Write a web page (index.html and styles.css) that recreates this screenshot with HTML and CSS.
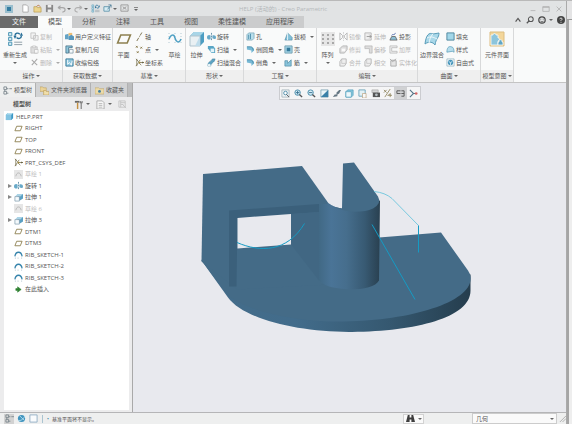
FILE: index.html
```html
<!DOCTYPE html>
<html lang="zh-CN">
<head>
  <meta charset="UTF-8">
  <title>HELP (活动的) - Creo Parametric</title>
  <link rel="stylesheet" href="styles.css">
</head>
<body>
<svg class="defs" aria-hidden="true">
  <defs>
    <symbol id="plane" viewBox="0 0 10 10"><path d="M3 2.500h6L7 7.500H1z" fill="none" stroke="#8d8050" stroke-width="1"/></symbol>
    <symbol id="csys" viewBox="0 0 10 10"><path d="M1 1l3 3 2-2M1 9l3-4 3 3M2 1v8M5 5h5" fill="none" stroke="#7a7350" stroke-width=".9"/><circle cx="5" cy="5" r="1" fill="#a28b3c"/><path d="M8 4l2 1-2 1z" fill="#5f5a3c"/></symbol>
    <symbol id="sketch" viewBox="0 0 10 10"><path d="M1 7C2 1 8 1 9 7" fill="none" stroke="#3583ab" stroke-width="1.400"/><path d="M1 9h1M4 9h1M8 9h1" stroke="#9fb7c4"/></symbol>
    <symbol id="sketch-off" viewBox="0 0 10 10"><path d="M0 0h10v10H0z" fill="#e6e6e6"/><path d="M2 7C3 2 7 2 8 7" fill="none" stroke="#b5b5b5"/></symbol>
    <symbol id="revolve" viewBox="0 0 10 10"><path d="M0 6c0-3 3-3 4-2v4C2 9 0 8 0 6zM6 4c2-1 4 0 4 2S8 8 6 7z" fill="#68a9c8"/><path d="M5 1v8" stroke="#5b8aa3" stroke-dasharray="2 1"/></symbol>
    <symbol id="extrude" viewBox="0 0 10 10"><path d="M4 1h6v5L7 8H4z" fill="#5ba0c3"/><path d="M4 1h6L7 4H1z" fill="#a9d3e6"/><path d="M1 4h5v5H1z" fill="#f5fafc" stroke="#7291a4" stroke-width=".7"/></symbol>
    <symbol id="part" viewBox="0 0 10 10"><path d="M1 3l2-2h6v6L7 9H1z" fill="#3b97c5"/><path d="M1 3h6v6H1z" fill="#82c3e2"/><path d="M1 3l2-2h6L7 3z" fill="#b7e0f1"/></symbol>
    <symbol id="insert" viewBox="0 0 10 10"><path d="M2 4h2V2l4 3-4 3V6H2z" fill="#2e8131" stroke="#2e8131" stroke-width=".6"/></symbol>
    <symbol id="copy" viewBox="0 0 10 10"><path d="M1 1h5v6H1zM4 4h5v5H4z" fill="#f3f3f3" stroke="#c4c4c4"/></symbol>
    <symbol id="paste" viewBox="0 0 10 10"><path d="M1 2h7v7H1z" fill="#ddd" stroke="#c4c4c4"/><path d="M3 1h3v2H3zM5 5h4v4H5z" fill="#f8f8f8" stroke="#bbb" stroke-width=".7"/></symbol>
    <symbol id="delete" viewBox="0 0 10 10"><path d="M2 2l6 6M8 1L2 8" stroke="#a9a9a9" stroke-width="1.200"/></symbol>
    <symbol id="udf" viewBox="0 0 10 10"><path d="M0 3l4-1v6H0z" fill="#64a3c5"/><path d="M4 1h4v3H4z" fill="#efbd72"/><path d="M4 5l3-2 3 2v4H4z" fill="#5796bc"/></symbol>
    <symbol id="geom" viewBox="0 0 10 10"><path d="M1 9V1h7v2H4v6z" fill="#91c8dc" stroke="#37647d" stroke-width=".8"/><path d="M5 5h4v4H5z" fill="#f4f9fb" stroke="#6c8798" stroke-width=".7"/></symbol>
    <symbol id="wrap" viewBox="0 0 10 10"><path d="M1 1h8v8H1z" fill="#8bc4dc" stroke="#3d7d9b"/><path d="M3 2v5l2-2 2 3 1-5" fill="none" stroke="#fff"/></symbol>
    <symbol id="axis" viewBox="0 0 10 10"><path d="M2 10L8 0" stroke="#776c45" stroke-dasharray="4 1 1 1"/></symbol>
    <symbol id="points" viewBox="0 0 10 10"><path d="M1 1l2 2m0-2L1 3M6 2l2 2m0-2L6 4M2 7l2 2m0-2L2 9" stroke="#887848"/></symbol>
    <symbol id="sweep" viewBox="0 0 10 10"><path d="M1 1h6l2 3v5H5L1 4z" fill="#58a5c5"/><path d="M4 4h4v4H4z" fill="#e2f2f8"/></symbol>
    <symbol id="blend" viewBox="0 0 10 10"><path d="M1 9C1 3 4 5 6 1h3C8 6 5 4 4 9z" fill="#5ba3c3" stroke="#447e9b" stroke-width=".6"/><circle cx="2.500" cy="8" r="1.500" fill="#e9f4f8"/></symbol>
    <symbol id="hole" viewBox="0 0 10 10"><path d="M1 3l2-2h6v6L7 9H1z" fill="#b8deeb" stroke="#6b9caf" stroke-width=".7"/><path d="M3 3v5M5 2v6" stroke="#4b8caa"/></symbol>
    <symbol id="round" viewBox="0 0 10 10"><path d="M1 2h4c3 0 4 2 4 4L6 9V6L1 5z" fill="#77b9d5"/><path d="M1 2h4c2 0 3 2 3 4" fill="none" stroke="#4b8dac"/></symbol>
    <symbol id="draft" viewBox="0 0 10 10"><path d="M1 9l3-8 5 5v3z" fill="#80bfd8" stroke="#538ca7" stroke-width=".7"/><path d="M4 1v8" stroke="#eef7fa"/></symbol>
    <symbol id="shell" viewBox="0 0 10 10"><path d="M1 1h8v8H1z" fill="#a4d3e5" stroke="#739fb1"/><path d="M3 3h4v4H3z" fill="#347a9b"/></symbol>
    <symbol id="rib" viewBox="0 0 10 10"><path d="M1 3h3v3l4-4v7H1z" fill="#89c4db" stroke="#548fa9" stroke-width=".8"/></symbol>
    <symbol id="mirror" viewBox="0 0 10 10"><path d="M1 1l3 3v2L1 9zM9 1L6 4v2l3 3z" fill="none" stroke="#b5b5b5"/><path d="M5 0v10" stroke="#b5b5b5" stroke-width=".6" stroke-dasharray="2 1"/></symbol>
    <symbol id="trim" viewBox="0 0 10 10"><path d="M1 4l3-3h5v4L6 9H1z" fill="#ddd" stroke="#b5b5b5"/><path d="M3 4h4v3H3z" fill="#fafafa"/></symbol>
    <symbol id="extend" viewBox="0 0 10 10"><path d="M1 1h7v8H1z" fill="#eee" stroke="#b5b5b5"/><path d="M3 5h5M6 3l2 2-2 2" fill="none" stroke="#999"/></symbol>
    <symbol id="offset" viewBox="0 0 10 10"><path d="M1 1h8v8H6V4H1z" fill="#ddd" stroke="#b5b5b5" stroke-width=".8"/></symbol>
    <symbol id="merge" viewBox="0 0 10 10"><path d="M1 4l2-3h5v5L6 9H1z" fill="#eee" stroke="#b5b5b5"/><path d="M3 1v5h5" fill="none" stroke="#bbb" stroke-width=".7"/></symbol>
    <symbol id="project" viewBox="0 0 10 10"><path d="M1 9l2-4h4l2 4z" fill="#8cbfd5" stroke="#555" stroke-width=".8"/><path d="M3 4c1-3 3 1 4-3" fill="none" stroke="#526cad"/></symbol>
    <symbol id="thicken" viewBox="0 0 10 10"><path d="M9 1H1v8h8V7H3V3h6z" fill="#f1f1f1" stroke="#aaa" stroke-width=".7"/></symbol>
    <symbol id="solidify" viewBox="0 0 10 10"><path d="M2 3h6v6H2zM1 1l3 3 4-3" fill="#e5e5e5" stroke="#aaa"/></symbol>
    <symbol id="fill" viewBox="0 0 10 10"><path d="M1 1h8v8H1z" fill="#a2d7e9" stroke="#4b839a"/></symbol>
    <symbol id="style" viewBox="0 0 10 10"><path d="M1 8C1 3 3 1 6 2c2 0 3 3 3 6L7 7z" fill="#b7deed" stroke="#5a9cb8" stroke-width=".8"/></symbol>
    <symbol id="free" viewBox="0 0 10 10"><path d="M1 1h8v8H1z" fill="none" stroke="#83a9b9" stroke-width=".7"/><circle cx="5" cy="5" r="3" fill="#4a98bd"/><path d="M3 4l2 1 2-1M5 5v3" stroke="#d1eaf4" fill="none"/></symbol>
    <symbol id="tree-icon" viewBox="0 0 10 10"><path d="M1 1h3v3H1zM1 6h3v3H1zM2 4v2M4 3h2M7 3h3M4 8h2" fill="none" stroke="#7e8990"/></symbol>
    <symbol id="folders" viewBox="0 0 10 10"><path d="M0 1h3l1 1h3v4H0z" fill="#ead399" stroke="#ba9d59" stroke-width=".6"/><path d="M4 5h2l1 1h3v4H4z" fill="#f0dfab" stroke="#b69349" stroke-width=".6"/></symbol>
    <symbol id="favorite" viewBox="0 0 10 10"><path d="M0 2h4l1 1h5v6H0z" fill="#ecdba9" stroke="#bda263" stroke-width=".6"/><circle cx="5" cy="6" r="1.600" fill="#427fa2"/></symbol>
    <symbol id="tools" viewBox="0 0 10 10"><path d="M1 1h5v2H1z" fill="#666"/><path d="M4 3v7" stroke="#c48f40" stroke-width="1.600"/><path d="M8 3v7M7 1v2h2V1" fill="none" stroke="#777" stroke-width="1.200"/></symbol>
    <symbol id="list" viewBox="0 0 10 10"><path d="M1 1h6l2 2v7H1z" fill="#f7f7f7" stroke="#aaa"/><path d="M3 4h4M3 6h4M3 8h4" stroke="#999" stroke-width=".7"/></symbol>
    <symbol id="filter" viewBox="0 0 10 10"><path d="M1 1h7v7H1zM3 1v7M3 3h5M3 5h3M5 5l4 4" fill="none" stroke="#c4c4c4"/></symbol>
    <symbol id="new" viewBox="0 0 10 10"><path d="M2 1h4l2 2v6H2z" fill="#fff" stroke="#9a9a9a" stroke-width=".8"/></symbol>
    <symbol id="open" viewBox="0 0 10 10"><path d="M1 3h3l1 1h4v5H1z" fill="#ecd58e" stroke="#b69749" stroke-width=".7"/><path d="M4 3c1-2 3-2 4 0" fill="none" stroke="#ba713b"/></symbol>
    <symbol id="save" viewBox="0 0 10 10"><path d="M1 1h8v8H1z" fill="#888"/><path d="M3 1h4v3H3zM3 6h4v3H3z" fill="#eee"/></symbol>
    <symbol id="undo" viewBox="0 0 10 10"><path d="M1 4h5c4 0 4 5 0 5M1 4l3-2M1 4l3 2" fill="none" stroke="#a6a6a6" stroke-width="1.200"/></symbol>
    <symbol id="redo" viewBox="0 0 10 10"><path d="M9 4H4C0 4 0 9 4 9M9 4L6 2M9 4L6 6" fill="none" stroke="#b0b0b0" stroke-width="1.200"/></symbol>
    <symbol id="regen" viewBox="0 0 10 10"><path d="M1 1h2v2H1zM1 4h2v2H1zM1 7h2v2H1z" fill="#d4ebf4" stroke="#4a93b3" stroke-width=".6"/><path d="M4.500 7h5M4.500 8.500h5" stroke="#788b95" stroke-width=".5"/><path d="M5 3c0-2 2-2 3-1M9 3c0 2-2 2-3 1" fill="none" stroke="#286f98" stroke-width=".9"/><path d="M4 3h2L5 5zM8 3h2L9 1z" fill="#286f98"/></symbol>
    <symbol id="window" viewBox="0 0 10 10"><path d="M1 3h6v5H1z" fill="#d9eef5" stroke="#6296ad"/><path d="M5 6l4-5M9 1v3M9 1H6" fill="none" stroke="#447895" stroke-width=".8"/></symbol>
    <symbol id="close-win" viewBox="0 0 10 10"><path d="M1 1h8v7H1zM3 3l4 3M7 3L3 6" fill="none" stroke="#999"/></symbol>
    <symbol id="search" viewBox="0 0 10 10"><circle cx="6" cy="4" r="3" fill="none" stroke="#555" stroke-width="1.300"/><path d="M4 6L1 9" stroke="#555" stroke-width="1.600"/></symbol>
    <symbol id="zoom-fit" viewBox="0 0 10 10"><path d="M1 1h8v8H1z" fill="#edf3f5" stroke="#9aabb3" stroke-width=".8"/><circle cx="5" cy="4.500" r="2" fill="#fff" stroke="#4c8ba8"/><path d="M6 6l3 3" stroke="#555"/></symbol>
    <symbol id="zoom-in" viewBox="0 0 10 10"><circle cx="4" cy="4" r="3" fill="#d8edf5" stroke="#4288a8"/><path d="M2 4h4M4 2v4" stroke="#356f91"/><path d="M6 6l3 3" stroke="#555" stroke-width="1.500"/></symbol>
    <symbol id="zoom-out" viewBox="0 0 10 10"><circle cx="4" cy="4" r="3" fill="#d8edf5" stroke="#4288a8"/><path d="M2 4h4" stroke="#356f91"/><path d="M6 6l3 3" stroke="#555" stroke-width="1.500"/></symbol>
    <symbol id="repaint" viewBox="0 0 10 10"><path d="M1 1h8v8H1z" fill="#e9f4f8" stroke="#6c98ac" stroke-width=".8"/><path d="M1 9L9 1v8z" fill="#3a80a8"/></symbol>
    <symbol id="shade" viewBox="0 0 10 10"><path d="M1 9l2-3h2V4l3-3h2L8 5 6 6v2z" fill="#657783"/></symbol>
    <symbol id="views" viewBox="0 0 10 10"><path d="M1 3l2-2h6v6L7 9H1z" fill="#8ccbe0" stroke="#499bb9" stroke-width=".8"/><path d="M1 3h6v6H1z" fill="#eef8fb" stroke="#499bb9" stroke-width=".7"/></symbol>
    <symbol id="view-manager" viewBox="0 0 10 10"><path d="M1 1h7v7H1z" fill="#e2f1f6" stroke="#6ea5bb"/><path d="M5 5h4v5H5z" fill="#f9f9f9" stroke="#b59c77" stroke-width=".7"/></symbol>
    <symbol id="camera" viewBox="0 0 10 10"><path d="M1 1h7v3H1z" fill="#d5d5d5" stroke="#999" stroke-width=".6"/><path d="M2 4h8v5H2z" fill="#555"/><circle cx="6" cy="6.500" r="1.500" fill="#b7bfc2"/></symbol>
    <symbol id="datum" viewBox="0 0 10 10"><path d="M1 1l3 3m0-3L1 4M8 0L2 9M6 7l2-2v4M5 7h5" fill="none" stroke="#8b7f55" stroke-width=".9"/></symbol>
    <symbol id="annotation" viewBox="0 0 10 10"><path d="M1 2h4M1 2v3h4M6 2h3v6H6M6 5h3" fill="none" stroke="#555"/></symbol>
    <symbol id="spin" viewBox="0 0 10 10"><path d="M1 1l4 4-4 4M5 5h3" fill="none" stroke="#547588" stroke-width="1.200"/><circle cx="8" cy="5" r="1.500" fill="#d26767"/></symbol>
    <symbol id="web" viewBox="0 0 10 10"><circle cx="5" cy="5" r="4" fill="#4194be"/><path d="M1 7c3 1 6-1 8-5M3 2l5 5" stroke="#b8e0f0" fill="none"/></symbol>
    <symbol id="blank" viewBox="0 0 10 10"><path d="M1 1h8v8H1z" fill="#f9fbfd" stroke="#91aec4"/></symbol>
    <symbol id="find" viewBox="0 0 10 10"><path d="M2 1h2v3h2V1h2l2 8H6V6H4v3H0z" fill="#3e3e3e"/></symbol>
  </defs>
</svg>

<div class="desktop">
<div class="app">
  <header class="titlebar">
    <div class="quick">
      <button class="app-icon" aria-label="Creo"><span></span></button>
      <button aria-label="新建"><svg><use href="#new"/></svg></button>
      <button aria-label="打开"><svg><use href="#open"/></svg></button>
      <button aria-label="保存"><svg><use href="#save"/></svg></button>
      <button aria-label="撤消"><svg><use href="#undo"/></svg><i class="caret"></i></button>
      <button aria-label="重做"><svg><use href="#redo"/></svg><i class="caret"></i></button>
      <button aria-label="重新生成"><svg><use href="#regen"/></svg></button>
      <button aria-label="窗口"><svg><use href="#window"/></svg><i class="caret"></i></button>
      <button aria-label="关闭窗口"><svg><use href="#close-win"/></svg></button>
      <button class="more" aria-label="自定义"><i class="caret"></i></button>
    </div>
    <h1 class="title">HELP (活动的) - Creo Parametric</h1>
    <div class="win-buttons">
      <button aria-label="最小化"><svg viewBox="0 0 10 10"><path d="M2 7h6"/></svg></button>
      <button aria-label="最大化"><svg viewBox="0 0 10 10"><path d="M1 2h8v6H1zM1 3h8"/></svg></button>
      <button aria-label="关闭"><svg viewBox="0 0 10 10"><path d="M2 2l6 6M8 2L2 8"/></svg></button>
    </div>
  </header>

  <nav class="tabs">
    <button class="tab file">文件</button>
    <button class="tab active">模型</button>
    <button class="tab">分析</button>
    <button class="tab">注释</button>
    <button class="tab">工具</button>
    <button class="tab">视图</button>
    <button class="tab">柔性建模</button>
    <button class="tab">应用程序</button>
    <div class="help">
      <button aria-label="折叠功能区"><svg viewBox="0 0 10 10"><path d="M2 7l3-4 3 4" fill="none" stroke="#555" stroke-width="1.500"/></svg></button>
      <button aria-label="搜索"><svg><use href="#search"/></svg></button>
      <button aria-label="社区"><svg viewBox="0 0 10 10"><circle cx="5" cy="5" r="4" fill="none" stroke="#444" stroke-width="1.500"/><path d="M3 4h1M6 4h1M3 6c1 2 3 2 4 0" fill="none" stroke="#444"/></svg><i class="caret"></i></button>
      <button aria-label="帮助"><svg viewBox="0 0 10 10"><circle cx="5" cy="5" r="5" fill="#444"/><path d="M3.500 4c0-2 3-2 3 0L5 5.500V6.500M5 7.500v1" fill="none" stroke="#fff"/></svg></button>
    </div>
  </nav>

  <div class="ribbon">
    <section class="group g-operate">
      <div class="tools">
        <button class="big"><svg><use href="#regen"/></svg>重新生成<i class="caret"></i></button>
        <div class="col">
          <button disabled><svg><use href="#copy"/></svg>复制</button>
          <button disabled><svg><use href="#paste"/></svg>粘贴<i class="caret"></i></button>
          <button disabled><svg><use href="#delete"/></svg>删除<i class="caret"></i></button>
        </div>
      </div>
      <button class="caption">操作<i class="caret"></i></button>
    </section>
    <section class="group g-data">
      <div class="tools">
        <div class="col">
          <button><svg><use href="#udf"/></svg>用户定义特征</button>
          <button><svg><use href="#geom"/></svg>复制几何</button>
          <button><svg><use href="#wrap"/></svg>收缩包络</button>
        </div>
      </div>
      <button class="caption">获取数据<i class="caret"></i></button>
    </section>
    <section class="group g-datum">
      <div class="tools">
        <button class="big"><svg><use href="#plane"/></svg>平面</button>
        <div class="col">
          <button><svg><use href="#axis"/></svg>轴</button>
          <button><svg><use href="#points"/></svg>点<i class="caret"></i></button>
          <button><svg><use href="#csys"/></svg>坐标系</button>
        </div>
        <button class="big"><svg viewBox="0 0 16 16"><path d="M2 2v12M8 2v12M14 2v12" stroke="#b2c9d3" stroke-dasharray="1 2"/><path d="M2 8C4 3 7 3 8 7s4 6 6 1" fill="none" stroke="#4fa0c3" stroke-width="1.500"/></svg>草绘</button>
      </div>
      <button class="caption">基准<i class="caret"></i></button>
    </section>
    <section class="group g-shape">
      <div class="tools">
        <button class="big"><svg viewBox="0 0 16 16"><path d="M1 5l4-4h10v10l-4 4H1z" fill="#4c9dc2"/><path d="M1 5l4-4h10l-4 4z" fill="#a8d5e7"/><path d="M1 5h10v10H1z" fill="#e9f0f3" stroke="#b0c3cd"/><path d="M11 5v10L6 15z" fill="#bedceb"/></svg>拉伸</button>
        <div class="col">
          <button><svg><use href="#revolve"/></svg>旋转</button>
          <button><svg><use href="#sweep"/></svg>扫描<i class="caret"></i></button>
          <button><svg><use href="#blend"/></svg>扫描混合</button>
        </div>
      </div>
      <button class="caption">形状<i class="caret"></i></button>
    </section>
    <section class="group g-eng">
      <div class="tools">
        <div class="col">
          <button><svg><use href="#hole"/></svg>孔</button>
          <button><svg><use href="#round"/></svg>倒圆角<i class="caret"></i></button>
          <button><svg><use href="#round"/></svg>倒角<i class="caret"></i></button>
        </div>
        <div class="col">
          <button><svg><use href="#draft"/></svg>拔模<i class="caret"></i></button>
          <button><svg><use href="#shell"/></svg>壳</button>
          <button><svg><use href="#rib"/></svg>筋<i class="caret"></i></button>
        </div>
      </div>
      <button class="caption">工程<i class="caret"></i></button>
    </section>
    <section class="group g-edit">
      <div class="tools">
        <button class="big"><svg viewBox="0 0 16 16"><path d="M1 1h14v14H1z" fill="#e6e6e6"/><path d="M2 4h12M2 8h12M2 12h12" stroke="#a8a8a8" stroke-width="2" stroke-dasharray="2 3"/></svg>阵列<i class="caret"></i></button>
        <div class="col">
          <button disabled><svg><use href="#mirror"/></svg>镜像</button>
          <button disabled><svg><use href="#trim"/></svg>修剪</button>
          <button disabled><svg><use href="#merge"/></svg>合并</button>
        </div>
        <div class="col">
          <button disabled><svg><use href="#extend"/></svg>延伸</button>
          <button disabled><svg><use href="#offset"/></svg>偏移</button>
          <button disabled><svg><use href="#merge"/></svg>相交</button>
        </div>
        <div class="col">
          <button><svg><use href="#project"/></svg>投影</button>
          <button disabled><svg><use href="#thicken"/></svg>加厚</button>
          <button disabled><svg><use href="#solidify"/></svg>实体化</button>
        </div>
      </div>
      <button class="caption">编辑<i class="caret"></i></button>
    </section>
    <section class="group g-surface">
      <div class="tools">
        <button class="big"><svg viewBox="0 0 16 16"><path d="M1 13C2 4 5 1 9 3l6-1c0 5-3 5-4 12-2-3-6-4-10-1z" fill="#a9d8e9" stroke="#5b9db9"/><path d="M9 3C6 6 6 8 5 12M3 7c4-2 6-1 10 1" fill="none" stroke="#eff8fb"/></svg>边界混合</button>
        <div class="col">
          <button><svg><use href="#fill"/></svg>填充</button>
          <button><svg><use href="#style"/></svg>样式</button>
          <button><svg><use href="#free"/></svg>自由式</button>
        </div>
      </div>
      <button class="caption">曲面<i class="caret"></i></button>
    </section>
    <section class="group g-intent">
      <div class="tools">
        <button class="big"><svg viewBox="0 0 16 16"><path d="M1 1h14v14H1z" fill="#f3d69a" stroke="#dcbd80"/><path d="M2 14V4h2c0-2 3-2 3 0h2v3c2 0 2 2 0 3v4z" fill="#8cc5dc" stroke="#f8fbfc" stroke-width=".8"/><path d="M9 14v-3h1c-1-3 4-3 3 0h1v3z" fill="#5fa5c4" stroke="#f8fbfc" stroke-width=".8"/></svg>元件界面</button>
      </div>
      <button class="caption">模型意图<i class="caret"></i></button>
    </section>
  </div>

  <div class="workspace">
    <aside class="side">
      <div class="side-tabs">
        <button class="active"><svg><use href="#tree-icon"/></svg>模型树</button>
        <button><svg><use href="#folders"/></svg>文件夹浏览器</button>
        <button><svg><use href="#favorite"/></svg>收藏夹</button>
      </div>
      <div class="side-bar">
        <b>模型树</b>
        <button aria-label="设置"><svg><use href="#tools"/></svg><i class="caret"></i></button>
        <button aria-label="显示"><svg><use href="#list"/></svg><i class="caret"></i></button>
        <button aria-label="过滤"><svg><use href="#filter"/></svg></button>
      </div>
      <div class="tree-box">
        <ul class="tree">
          <li class="root"><svg><use href="#part"/></svg>HELP.PRT</li>
          <li><svg><use href="#plane"/></svg>RIGHT</li>
          <li><svg><use href="#plane"/></svg>TOP</li>
          <li><svg><use href="#plane"/></svg>FRONT</li>
          <li><svg><use href="#csys"/></svg>PRT_CSYS_DEF</li>
          <li class="hidden"><svg><use href="#sketch-off"/></svg>草绘 1</li>
          <li class="parent"><button class="expand" aria-label="展开"></button><svg><use href="#revolve"/></svg>旋转 1</li>
          <li class="parent"><button class="expand" aria-label="展开"></button><svg><use href="#extrude"/></svg>拉伸 1</li>
          <li class="hidden"><svg><use href="#sketch-off"/></svg>草绘 6</li>
          <li class="parent"><button class="expand" aria-label="展开"></button><svg><use href="#extrude"/></svg>拉伸 3</li>
          <li><svg><use href="#plane"/></svg>DTM1</li>
          <li><svg><use href="#plane"/></svg>DTM3</li>
          <li><svg><use href="#sketch"/></svg>RIB_SKETCH-1</li>
          <li><svg><use href="#sketch"/></svg>RIB_SKETCH-2</li>
          <li><svg><use href="#sketch"/></svg>RIB_SKETCH-3</li>
          <li><svg><use href="#insert"/></svg>在此插入</li>
        </ul>
      </div>
    </aside>

    <main class="view">
      <div class="view-tools">
        <button aria-label="重新调整"><svg><use href="#zoom-fit"/></svg></button>
        <button aria-label="放大"><svg><use href="#zoom-in"/></svg></button>
        <button aria-label="缩小"><svg><use href="#zoom-out"/></svg></button>
        <button aria-label="重画"><svg><use href="#repaint"/></svg></button>
        <button aria-label="显示样式"><svg><use href="#shade"/></svg></button>
        <button aria-label="已保存方向"><svg><use href="#views"/></svg></button>
        <button aria-label="视图管理器"><svg><use href="#view-manager"/></svg></button>
        <button aria-label="透视图"><svg><use href="#camera"/></svg></button>
        <button aria-label="基准显示"><svg><use href="#datum"/></svg></button>
        <button class="on" aria-label="注释显示"><svg><use href="#annotation"/></svg></button>
        <button aria-label="旋转中心"><svg><use href="#spin"/></svg></button>
      </div>
      <svg class="model" viewBox="133 84 433 328" role="img" aria-label="HELP.PRT">
        <defs>
          <linearGradient id="cyl">
            <stop offset="0" stop-color="#416985"/>
            <stop offset=".2" stop-color="#4a7497"/>
            <stop offset=".45" stop-color="#466e8d"/>
            <stop offset=".75" stop-color="#385a73"/>
            <stop offset="1" stop-color="#294050"/>
          </linearGradient>
          <linearGradient id="rim">
            <stop offset="0" stop-color="#446c89"/>
            <stop offset=".35" stop-color="#426c8b"/>
            <stop offset=".7" stop-color="#355870"/>
            <stop offset="1" stop-color="#253d4d"/>
          </linearGradient>
        </defs>
        <!-- base plate, rim first -->
        <path d="M201.500 261L228 298C244 320 300 333 352 332.500C416 332 471 318 470.500 291V275L400 250H250z" fill="url(#rim)"/>
        <path d="M201.500 261L228 296C250 313 300 323 345 322C412 321 474 302 470.500 277Q470 274 468 271L441 233L379 238L319 205H230z" fill="#446b87"/>
        <!-- bracket -->
        <path d="M203 174.500L302 166.500L329 204.500L330 285L237 290L201.500 262z" fill="#446b87"/>
        <path d="M229 211L319 204.500V212.500L237.500 218.500L236.500 287H229z" fill="#3b607b"/>
        <path d="M291 214.500L319 212.500V281L291 245z" fill="#416783"/>
        <path class="opening" d="M237.500 218.500V249L291 245V214.500z"/>
        <!-- boss -->
        <path d="M319 205L329 204Q334 208 342 209L380 201L379 281C376 287 364 290 350 290C335 289 324 287 319 281z" fill="url(#cyl)"/>
        <path d="M343 164L354 163L378 197Q382 204 373 209C362 214 343 214 328 204Q334 208 342 209z" fill="#446b87"/>
        <!-- sketch curves -->
        <path class="curve" d="M237 243C260 253 287 253 304.500 224"/>
        <path class="curve far" d="M374 192Q385 193 392 199L418.500 226"/>
        <path class="curve" d="M418.500 226V253M372 225L415 300"/>
      </svg>
    </main>
  </div>

  <footer class="status">
    <button class="on" aria-label="模型树"><svg><use href="#tree-icon"/></svg></button>
    <button aria-label="浏览器"><svg><use href="#web"/></svg></button>
    <button aria-label="全屏"><svg><use href="#blank"/></svg></button>
    <p class="message">基准平面将不显示。</p>
    <button class="find" aria-label="查找"><svg><use href="#find"/></svg><i class="caret"></i></button>
    <div class="picker">
      <select aria-label="选择过滤器"><option>几何</option></select>
      <i class="caret"></i>
    </div>
    <svg class="grip" viewBox="0 0 8 8"><path d="M1 8l7-7M4 8l4-4" stroke="#aaa"/></svg>
  </footer>
</div>
<div class="behind"></div>
</div>
</body>
</html>
```

FILE: styles.css
```css
* { box-sizing: border-box; }
body {
  margin: 0;
  background: #e4e4e5;
  color: #555;
  font: 6px/8px "Open Sans", "Noto Sans CJK SC", sans-serif;
}
button, select {
  font: inherit;
  color: inherit;
  background: none;
  border: 0;
  padding: 0;
  margin: 0;
  white-space: nowrap;
}
button { display: flex; align-items: center; }
svg { width: 9px; height: 9px; flex: none; }
.defs { position: absolute; width: 0; height: 0; }
.caret {
  border: 2px solid transparent;
  border-top-color: #666;
  border-bottom: 0;
  margin-left: 3px;
  flex: none;
}

.desktop { display: flex; height: 100vh; border-top: 1px solid #b9b9b9; }
.app {
  flex: 1;
  min-width: 0;
  display: flex;
  flex-direction: column;
  border-right: 1px solid #aaa;
}
.behind {
  width: 5px;
  margin-top: 18px;
  border-top: 1px solid #999;
  border-left: 2px solid #a5a5a5;
  background: #eee;
}

/* title bar */
.titlebar {
  display: grid;
  grid-template-columns: 1fr auto 1fr;
  align-items: center;
  height: 15px;
  background: #e1e3e4;
}
.quick { display: flex; align-items: center; gap: 3px; padding-left: 5px; }
.quick .caret { margin-left: 1px; }
.app-icon { margin-right: 5px; }
.app-icon span { width: 8px; height: 8px; background: #347ca0; border: 2px solid #9bbfce; }
.more { border-top: 1px solid #888; margin-left: 2px; }
.more .caret { margin: 1px 0 0; }
.title { margin: 0; color: #b4b8ba; font-size: 6px; font-weight: 400; }
.win-buttons { display: flex; justify-content: flex-end; gap: 5px; padding-right: 3px; }
.win-buttons svg { width: 8px; height: 8px; fill: none; stroke: #b0b0b0; }

/* ribbon tabs */
.tabs {
  display: flex;
  height: 12px;
  background: #e1e3e4;
  font-size: 7px;
}
.tab { padding: 0 10px; background: #cbcccd; }
.tab.file { padding: 0 12px; background: #6b6b6b; color: #f2f2f2; }
.tab.active { background: #fafbfb; }
.help { display: flex; align-items: center; gap: 4px; margin: 0 1px 4px auto; }
.help svg { width: 8px; height: 8px; }

/* ribbon */
.ribbon {
  display: flex;
  height: 55px;
  background: #f9fafa;
  border-bottom: 1px solid #c4c4c4;
}
.group {
  display: flex;
  flex-direction: column;
  flex: none;
  background: #f9fafa;
  border-right: 1px solid #d8d9da;
}
.g-operate { width: 63px; }
.g-data { width: 50px; }
.g-datum { width: 73px; }
.g-shape { width: 58px; }
.g-eng { width: 73px; }
.g-edit { width: 101px; }
.g-surface { width: 63px; }
.g-intent { width: 33px; }
.tools { display: flex; flex: 1; padding: 2px 2px 0; gap: 3px; }
.caption { justify-content: center; height: 12px; background: #efefef; }
.caption .caret { margin-left: 1px; }
.big { flex-direction: column; min-width: 17px; }
.big svg { width: 16px; height: 16px; margin: 1px 0 4px; }
.big .caret { margin: 3px 0 0; }
.col button { height: 13px; gap: 1px; }
button:disabled { color: #b9b9b9; }
button:disabled .caret { border-top-color: #aaa; }
.g-operate .tools { padding-left: 3px; }
.g-shape .tools { gap: 2px; }
.g-eng .tools { gap: 1px; }
.g-eng .col:first-child { width: 37px; }
.g-edit .col { width: 22px; }
.g-surface .tools { gap: 2px; }
.g-intent .tools { justify-content: center; }

/* model tree */
.workspace { flex: 1; min-height: 0; display: flex; }
.side {
  flex: none;
  width: 133px;
  display: flex;
  flex-direction: column;
  background: #ececed;
  border-right: 1px solid #a9a9a9;
}
.side-tabs { display: flex; height: 14px; background: #bcbdbe; }
.side-tabs button { padding: 0 3px 0 4px; gap: 2px; background: #d2d3d4; border-right: 1px solid #b1b1b1; }
.side-tabs .active { background: #eeefef; padding-left: 3px; }
.side-bar { display: flex; align-items: center; height: 14px; gap: 6px; padding: 0 5px 0 13px; }
.side-bar b { margin-right: auto; }
.tree-box { flex: 1; margin: 0 3px 2px 4px; background: #fff; }
.tree {
  display: grid;
  grid-auto-rows: 1fr;
  height: 184px;
  margin: 0;
  padding: 0;
  list-style: none;
}
.tree li { display: flex; align-items: center; gap: 2px; padding-left: 10px; }
.tree .root { padding-left: 1px; }
.tree .hidden { color: #bbb; }
.tree .parent { padding-left: 4px; }
.expand {
  border: 2px solid transparent;
  border-left: 4px solid #888;
  border-right: 0;
}

/* graphics window */
.view { position: relative; flex: 1; min-width: 0; background: #e8e9ee; }
.view-tools {
  position: absolute;
  top: 3px;
  left: 50%;
  transform: translateX(-50%);
  display: flex;
  width: 142px;
  height: 14px;
  background: #f5f5f6;
  border: 1px solid #cbccd0;
}
.view-tools button { flex: 1; justify-content: center; }
.view-tools .on { background: #d0d1d3; }
.model { display: block; width: 100%; height: 100%; }
.opening { fill: #e8e9ee; }
.curve { fill: none; stroke: #159bc4; }
.far { stroke: #79c9df; }

/* status bar */
.status {
  display: flex;
  align-items: center;
  height: 12px;
  border-top: 1px solid #b5b5b7;
  background: #eeefef;
  padding-left: 4px;
  gap: 2px;
}
.status button { width: 10px; height: 10px; justify-content: center; }
.status .on { background: #d2d2d2; }
.message {
  flex: 1;
  margin: 0 0 0 2px;
  padding-left: 4px;
  border-left: 1px solid #aac4d1;
  font-size: 5px;
}
.message::before { content: "•"; margin-right: 3px; color: #27799c; }
.status .find { width: 21px; background: #fafafa; border: 1px solid #d2d2d2; margin-right: 46px; }
.picker {
  display: flex;
  align-items: center;
  width: 85px;
  height: 11px;
  background: #fafafa;
  border: 1px solid #ccc;
  padding-right: 2px;
}
.picker select { flex: 1; appearance: none; padding-left: 3px; }
.grip { width: 7px; height: 7px; }
```
